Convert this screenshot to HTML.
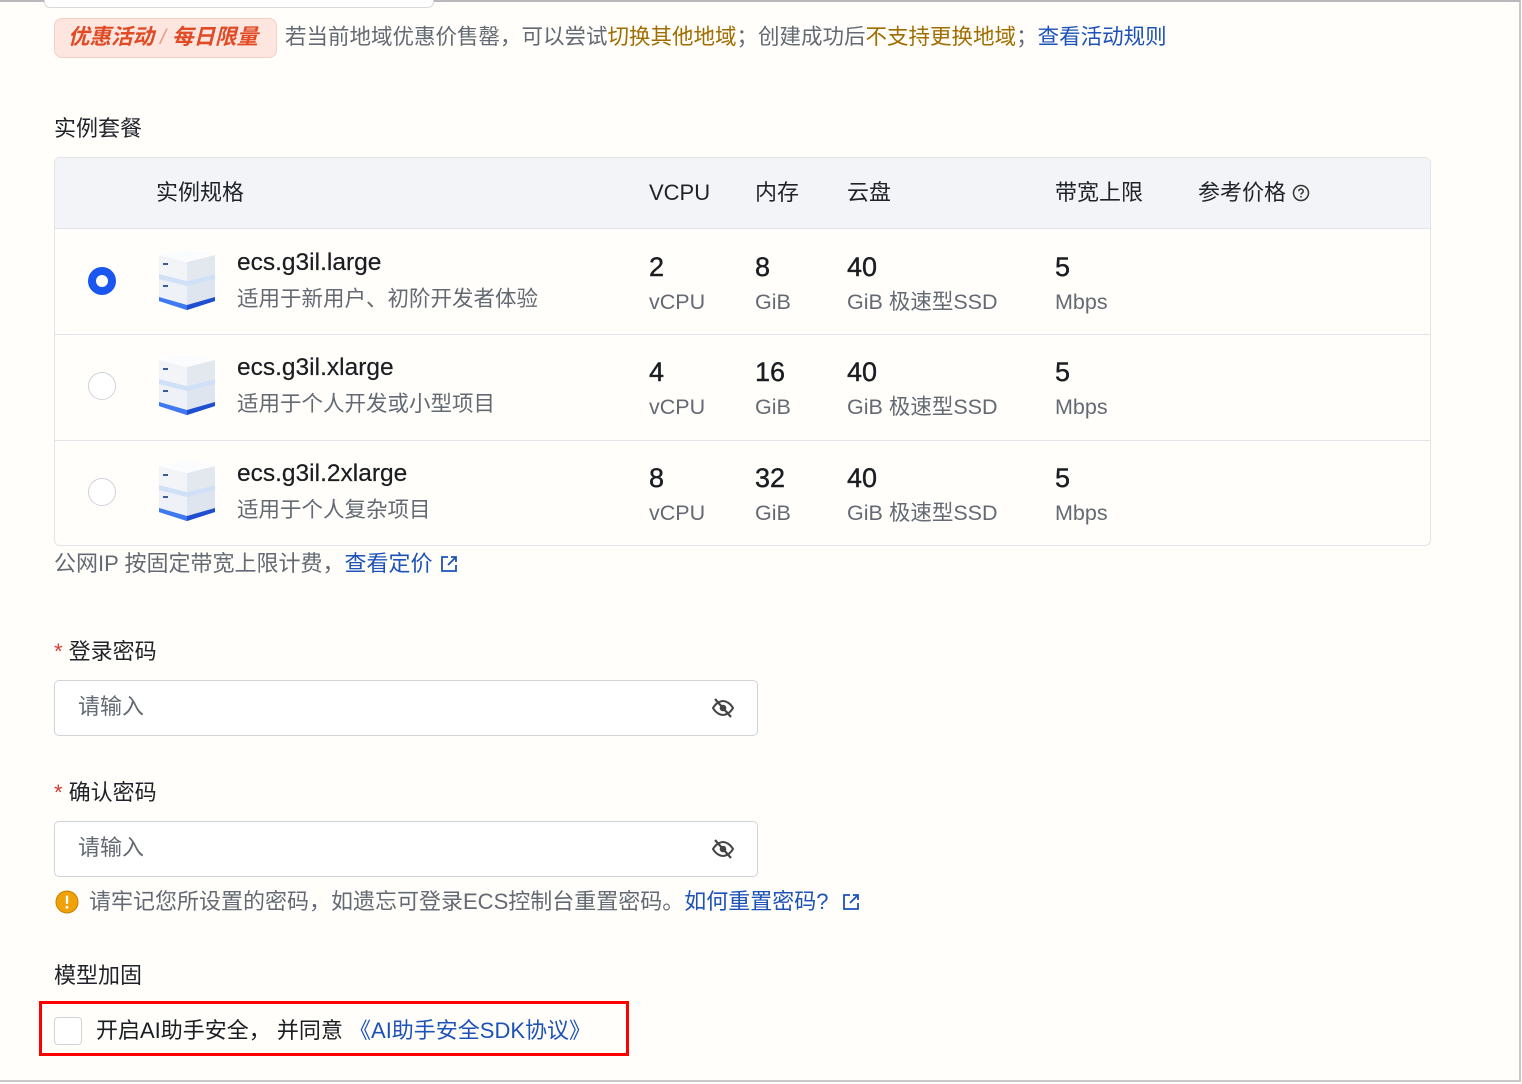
<!DOCTYPE html>
<html><head><meta charset="utf-8">
<style>
*{margin:0;padding:0;box-sizing:border-box}
html,body{width:1522px;height:1084px;overflow:hidden;background:#fffefa}
body{font-family:"Liberation Sans","Noto Sans CJK SC",sans-serif;color:#1f2329;position:relative}
.a{position:absolute;white-space:nowrap}
.frame{position:absolute;left:0;top:0;width:1521px;height:1082px;border-top:2px solid #b8b8b8;border-right:2px solid #c8c8c8;border-bottom:2px solid #c8c8c8}
.t{font-size:22px;line-height:26px}
.g{color:#646a73}
.blue{color:#1d52b8}
.gold{color:#a06d00}
.tbl{position:absolute;left:54px;top:157px;width:1377px;height:389px;border:1px solid #e2e4e8;border-radius:6px;overflow:hidden;background:#fffefa}
.hd{position:absolute;left:0;top:0;width:100%;height:71px;background:#f3f4f7;border-bottom:1px solid #e2e4e8}
.num{font-size:27px;line-height:30px;color:#1a1d21;-webkit-text-stroke:0.4px #1a1d21}
.sub{font-size:21.5px;line-height:26px;color:#646a73}
.name{font-size:24.5px;line-height:28px;color:#1a1d21;-webkit-text-stroke:0.2px #1a1d21}
.input{position:absolute;left:54px;width:704px;height:56px;border:1.5px solid #d0d3d8;border-radius:5px;background:#fff}
</style></head><body>
<div class="frame"></div>
<div class="a" style="left:44px;top:-12px;width:390px;height:20px;border:1.5px solid #d6d8dc;border-radius:6px;background:#fff"></div>

<div class="a" style="left:54px;top:18px;width:223px;height:40px;background:#fde6df;border:1px solid #f8cfc3;border-radius:8px"></div>
<div class="a" style="left:68px;top:24px;font-size:21.5px;line-height:26px;font-style:italic;font-weight:bold;color:#e04a25">优惠活动 <span style="font-weight:normal;color:#e89b85">/</span> 每日限量</div>
<div class="a g" style="left:285px;top:24px;font-size:21.5px;line-height:26px">若当前地域优惠价售罄，可以尝试<span class="gold">切换其他地域</span>；创建成功后<span class="gold">不支持更换地域</span>；<span class="blue">查看活动规则</span></div>

<div class="a t" style="left:54px;top:116px">实例套餐</div>

<div class="tbl">
 <div class="hd">
  <div class="a t" style="left:101px;top:22px">实例规格</div>
  <div class="a t" style="left:594px;top:22px">VCPU</div>
  <div class="a t" style="left:700px;top:22px">内存</div>
  <div class="a t" style="left:792px;top:22px">云盘</div>
  <div class="a t" style="left:1000px;top:22px">带宽上限</div>
  <div class="a t" style="left:1143px;top:22px">参考价格 <svg width="18" height="18" viewBox="0 0 18 18" style="vertical-align:-2px"><circle cx="9" cy="9" r="7.5" fill="none" stroke="#333" stroke-width="1.5"/><path d="M6.8 7.2a2.2 2.2 0 1 1 3 2c-.6.3-.8.7-.8 1.3" fill="none" stroke="#333" stroke-width="1.5"/><circle cx="9" cy="12.8" r=".9" fill="#333"/></svg></div>
 </div>
 <div class="a" style="left:0;top:176px;width:100%;height:1px;background:#e2e4e8"></div>
 <div class="a" style="left:0;top:282px;width:100%;height:1px;background:#e2e4e8"></div>
</div>

<div id="rows"></div>

<div class="a t g" style="left:54px;top:551px">公网IP 按固定带宽上限计费，<span class="blue">查看定价</span> <svg width="20" height="20" viewBox="0 0 20 20" style="vertical-align:-3px"><path d="M9 3H3v14h14v-6M12 3h5v5M17 3l-8 8" fill="none" stroke="#1d52b8" stroke-width="1.8"/></svg></div>

<div class="a t" style="left:54px;top:639px"><span style="color:#d83931">*</span> 登录密码</div>
<div class="input" style="top:680px"><div class="a t" style="left:23px;top:13px;color:#646a73">请输入</div>
<svg class="a" style="left:656px;top:16px" width="24" height="22" viewBox="0 0 24 22"><path d="M2 11c3-5 7-7 10-7s7 2 10 7c-3 5-7 7-10 7s-7-2-10-7z" fill="none" stroke="#444" stroke-width="2"/><circle cx="12" cy="11" r="3.3" fill="#444"/><path d="M4 2l16 18" stroke="#444" stroke-width="2.2"/></svg></div>

<div class="a t" style="left:54px;top:780px"><span style="color:#d83931">*</span> 确认密码</div>
<div class="input" style="top:821px"><div class="a t" style="left:23px;top:13px;color:#646a73">请输入</div>
<svg class="a" style="left:656px;top:16px" width="24" height="22" viewBox="0 0 24 22"><path d="M2 11c3-5 7-7 10-7s7 2 10 7c-3 5-7 7-10 7s-7-2-10-7z" fill="none" stroke="#444" stroke-width="2"/><circle cx="12" cy="11" r="3.3" fill="#444"/><path d="M4 2l16 18" stroke="#444" stroke-width="2.2"/></svg></div>

<svg class="a" style="left:55px;top:890px" width="24" height="24" viewBox="0 0 24 24"><circle cx="12" cy="12" r="11" fill="#f0a20b" stroke="#c57f00" stroke-width="1"/><rect x="10.8" y="5.5" width="2.4" height="8.5" rx="1" fill="#fff"/><circle cx="12" cy="17.3" r="1.4" fill="#fff"/></svg>
<div class="a t g" style="left:89px;top:889px">请牢记您所设置的密码，如遗忘可登录ECS控制台重置密码。<span class="blue">如何重置密码?</span> &nbsp;<svg width="20" height="20" viewBox="0 0 20 20" style="vertical-align:-3px"><path d="M9 3H3v14h14v-6M12 3h5v5M17 3l-8 8" fill="none" stroke="#1d52b8" stroke-width="1.8"/></svg></div>

<div class="a t" style="left:54px;top:963px">模型加固</div>
<div class="a" style="left:39px;top:1001px;width:590px;height:55px;border:3px solid #f00"></div>
<div class="a" style="left:54px;top:1017px;width:28px;height:28px;border:1.5px solid #d0d3d8;border-radius:4px;background:#fff"></div>
<div class="a" style="left:96px;top:1018px;font-size:22px;line-height:26px;color:#1a1d21">开启AI助手安全， 并同意 <span class="blue">《AI助手安全SDK协议》</span></div>

<script>
var data=[
 ["ecs.g3il.large","适用于新用户、初阶开发者体验","2","8",true],
 ["ecs.g3il.xlarge","适用于个人开发或小型项目","4","16",false],
 ["ecs.g3il.2xlarge","适用于个人复杂项目","8","32",false]];
var tops=[229,334,440],h="";
var icon='<svg width="60" height="64" viewBox="0 0 60 64"><path d="M2 54l28 9 28-9-28-7z" fill="#2d62e6"/><path d="M2 49v5l28 9v-5z" fill="#3f78f0"/><path d="M58 49v5l-28 9v-5z" fill="#1f4fd0"/><path d="M2 31l28 7v20L2 50z" fill="#eef2f8"/><path d="M58 31l-28 7v20l28-8z" fill="#dfe5ee"/><path d="M2 27l28 7 28-7v5l-28 7-28-7z" fill="#cfe0f7"/><path d="M2 8l28 7v19L2 27z" fill="#f2f4f8"/><path d="M58 8l-28 7v19l28-7z" fill="#e3e7ee"/><path d="M2 8l28-6 28 6-28 7z" fill="#fbfcfe"/><rect x="6" y="16" width="5" height="2" fill="#3a5a9a"/><rect x="6" y="38" width="5" height="2" fill="#3a5a9a"/></svg>';
data.forEach(function(d,i){var t=tops[i];
h+=d[4]?'<svg class="a" style="left:87px;top:'+(t+37)+'px" width="30" height="30"><circle cx="15" cy="15" r="10" fill="#fff" stroke="#1a56f0" stroke-width="8"/></svg>':'<div class="a" style="left:88px;top:'+(t+38)+'px;width:28px;height:28px;border:1.5px solid #d0d3d8;border-radius:50%;background:#fff"></div>';
h+='<div class="a" style="left:157px;top:'+(t+18)+'px">'+icon+'</div>';
h+='<div class="a name" style="left:237px;top:'+(t+20)+'px">'+d[0]+'</div>';
h+='<div class="a sub" style="left:237px;top:'+(t+57)+'px">'+d[1]+'</div>';
[[649,d[2],"vCPU"],[755,d[3],"GiB"],[847,"40","GiB 极速型SSD"],[1055,"5","Mbps"]].forEach(function(c){
h+='<div class="a num" style="left:'+c[0]+'px;top:'+(t+23)+'px">'+c[1]+'</div><div class="a sub" style="left:'+c[0]+'px;top:'+(t+60)+'px">'+c[2]+'</div>';});
});
document.getElementById('rows').outerHTML=h;
</script>
</body></html>
